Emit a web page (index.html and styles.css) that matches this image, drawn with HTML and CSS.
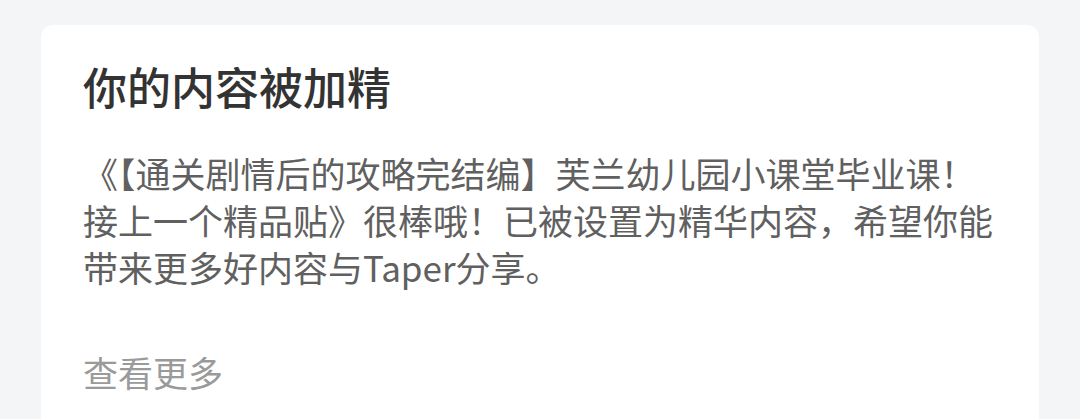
FILE: index.html
```html
<!DOCTYPE html>
<html lang="zh-CN">
<head>
<meta charset="utf-8">
<link rel="stylesheet" href="styles.css">
</head>
<body>
<div class="page">
  <div class="card">
    <h1 class="title">你的内容被加精</h1>
    <p class="content">《【通关剧情后的攻略完结编】芙兰幼儿园小课堂毕业课！接上一个精品贴》很棒哦！已被设置为精华内容，希望你能带来更多好内容与Taper分享。</p>
    <div class="more">查看更多</div>
  </div>
</div>
</body>
</html>
```
FILE: styles.css
```css
html, body {
  margin: 0;
  padding: 0;
  background: #f4f5f7;
  font-family: "Noto Sans CJK SC", "Noto Sans", sans-serif;
}
.page {
  padding: 25px 41px 0 41px;
  height: 419px;
  box-sizing: border-box;
  overflow: hidden;
}
.card {
  background: #ffffff;
  border-radius: 12px;
  padding: 35px 42px 60px 42px;
}
.title {
  margin: 0;
  font-size: 44px;
  line-height: 52px;
  font-weight: 500;
  color: #333333;
}
.content {
  margin: 37px 0 0 0;
  font-size: 35px;
  line-height: 47px;
  color: #606060;
}
.more {
  margin-top: 59px;
  font-size: 35px;
  line-height: 46px;
  color: #9a9a9a;
}
```
